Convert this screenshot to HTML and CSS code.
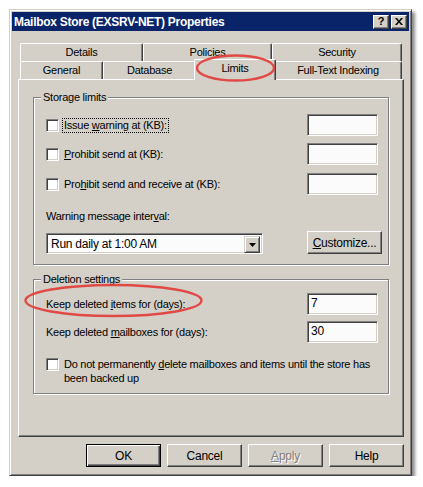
FILE: index.html
```html
<!DOCTYPE html>
<html>
<head>
<meta charset="utf-8">
<title>Mailbox Store (EXSRV-NET) Properties</title>
<link rel="stylesheet" href="styles.css">
</head>
<body>
<div class="window">
  <div class="titlebar">
    <span class="title">Mailbox Store (EXSRV-NET) Properties</span>
    <div class="caption-btns">
      <span class="cbtn q">?</span>
      <span class="cbtn"><svg width="8" height="7" viewBox="0 0 8 7"><path d="M0 0h2l2 2.5L6 0h2L5 3.5 8 7H6L4 4.5 2 7H0l3-3.5z" fill="#000"/></svg></span>
    </div>
  </div>
  <div class="body">
    <div class="tabs">
      <div class="tabrow">
        <div class="tab t-details">Details</div>
        <div class="tab t-policies">Policies</div>
        <div class="tab t-security">Security</div>
      </div>
      <div class="tabrow">
        <div class="tab t-general">General</div>
        <div class="tab t-database">Database</div>
        <div class="tab t-limits selected">Limits</div>
        <div class="tab t-fulltext">Full-Text Indexing</div>
      </div>
    </div>
    <div class="panel">
      <div class="group storage">
        <div class="legend">Storage limits</div>
        <div class="row r1">
          <span class="check"></span>
          <span class="lbl focus">Issue <u>w</u>arning at (KB):</span>
          <span class="textbox"></span>
        </div>
        <div class="row r2">
          <span class="check"></span>
          <span class="lbl"><u>P</u>rohibit send at (KB):</span>
          <span class="textbox"></span>
        </div>
        <div class="row r3">
          <span class="check"></span>
          <span class="lbl">Pro<u>h</u>ibit send and receive at (KB):</span>
          <span class="textbox"></span>
        </div>
        <div class="caption">Warning message inter<u>v</u>al:</div>
        <div class="row combo-row">
          <div class="combo">
            <span class="combo-text">Run daily at 1:00 AM</span>
            <span class="combo-btn"><svg width="7" height="4" viewBox="0 0 7 4"><path d="M0 0h7L3.5 4z" fill="#000"/></svg></span>
          </div>
          <span class="btn customize"><u>C</u>ustomize...</span>
        </div>
      </div>
      <div class="group deletion">
        <div class="legend">Deletion settings</div>
        <div class="row d1">
          <span class="plain">Keep deleted <u>i</u>tems for (days):</span>
          <span class="textbox">7</span>
        </div>
        <div class="row d2">
          <span class="plain">Keep deleted <u>m</u>ailboxes for (days):</span>
          <span class="textbox">30</span>
        </div>
        <div class="row d3">
          <span class="check"></span>
          <span class="lbl multi">Do not permanently <u>d</u>elete mailboxes and items until the store has<br>been backed up</span>
        </div>
      </div>
    </div>
    <div class="btnrow">
      <span class="btn default">OK</span>
      <span class="btn">Cancel</span>
      <span class="btn disabled"><u>A</u>pply</span>
      <span class="btn">Help</span>
    </div>
  </div>
</div>
<svg class="marks" width="423" height="487" viewBox="0 0 423 487">
  <ellipse cx="235.5" cy="68" rx="38.5" ry="12.5" fill="none" stroke="#e23a35" stroke-width="2.4" stroke-opacity="0.9"/>
  <ellipse cx="113.5" cy="300.5" rx="88" ry="15.5" fill="none" stroke="#e23a35" stroke-width="2.4" stroke-opacity="0.9"/>
</svg>
</body>
</html>
```
FILE: styles.css
```css
* { box-sizing: border-box; }

body {
  margin: 0;
  background: #fff;
  font-family: "Liberation Sans", Arial, sans-serif;
  font-size: 11px;
  letter-spacing: -0.25px;
  color: #000;
}

u { text-decoration: underline; text-underline-offset: 1px; }

.window {
  margin: 9px 0 0 9px;
  width: 403px;
  background: #d4d0c8;
  border: 1px solid;
  border-color: #d4d0c8 #404040 #404040 #d4d0c8;
  box-shadow: inset 1px 1px 0 #fff, inset -1px -1px 0 #808080, 3px 3px 3px rgba(0,0,0,0.45);
  padding: 2px;
}

.titlebar {
  height: 19px;
  background: #0a246a;
  display: flex;
  align-items: center;
  padding-left: 2px;
}

.title {
  color: #fff;
  font-weight: bold;
  font-size: 12px;
  letter-spacing: -0.28px;
}

.caption-btns {
  margin-left: auto;
  margin-right: 2px;
  display: flex;
  gap: 2px;
}

.cbtn {
  width: 16px;
  height: 14px;
  background: #d4d0c8;
  border: 1px solid;
  border-color: #fff #404040 #404040 #fff;
  box-shadow: inset -1px -1px 0 #808080;
  display: flex;
  align-items: center;
  justify-content: center;
  font-weight: bold;
  font-size: 11px;
  line-height: 1;
}

.body {
  padding: 12px 5px 6px 6px;
}

.tabs {
  margin: 0 2px;
  height: 36px;
}

.tabrow {
  display: flex;
  height: 18px;
}

.tab {
  height: 18px;
  background: #d4d0c8;
  border-left: 1px solid #fff;
  border-top: 1px solid #fff;
  border-right: 1px solid #404040;
  box-shadow: inset -1px 0 0 #808080;
  border-top-left-radius: 2px;
  border-top-right-radius: 2px;
  text-align: center;
  line-height: 16px;
}

.t-details { width: 123px; }
.t-policies { width: 129px; }
.t-security { width: 130px; }
.t-general { width: 83px; }
.t-database { width: 93px; }
.t-limits { width: 78px; }
.t-fulltext { width: 128px; }

.tab.selected {
  position: relative;
  z-index: 1;
  width: 82px;
  height: 21px;
  margin: -2px -2px 0 -2px;
}

.panel {
  height: 358px;
  border: 1px solid;
  border-color: #fff #404040 #404040 #fff;
  box-shadow: inset -1px -1px 0 #808080;
  padding: 17px 14px 0 14px;
}

.group {
  display: flex;
  flex-direction: column;
  border: 1px solid #808080;
  box-shadow: inset 1px 1px 0 #fff, 1px 1px 0 #fff;
  padding: 0 6px 10px 12px;
}

.group.deletion {
  margin-top: 14px;
  padding-bottom: 8px;
}

.legend {
  align-self: flex-start;
  margin: -7px 0 0 -5px;
  padding: 0 2px;
  line-height: 13px;
  background: #d4d0c8;
}

.row {
  display: flex;
  align-items: center;
  height: 22px;
}

.r1 { margin-top: 10px; }
.r2 { margin-top: 7px; }
.r3 { margin-top: 8px; }

.caption {
  margin-top: 15px;
  line-height: 13px;
}

.combo-row {
  margin-top: 8px;
  height: 23px;
  align-items: flex-end;
}

.d1 { margin-top: 7px; }
.d2 { margin-top: 6px; }
.d3 {
  margin-top: 14px;
  height: 28px;
  align-items: flex-start;
}
.d3 .check { margin-top: 1px; }

.check {
  flex: none;
  width: 13px;
  height: 13px;
  background: #fff;
  border: 1px solid;
  border-color: #808080 #fff #fff #808080;
  box-shadow: inset 1px 1px 0 #404040, inset -1px -1px 0 #d4d0c8;
}

.lbl {
  margin-left: 3px;
  padding: 0 1px;
  border: 1px dotted transparent;
  line-height: 13px;
}

.lbl.focus { border-color: #000; }

.lbl.multi {
  line-height: 14px;
  border: none;
  padding: 0;
  margin-left: 5px;
}

.plain { line-height: 13px; }

.textbox {
  margin-left: auto;
  margin-right: 4px;
  width: 71px;
  height: 22px;
  background: #fbfbfb;
  border: 1px solid;
  border-color: #808080 #fff #fff #808080;
  box-shadow: inset 1px 1px 0 #404040, inset -1px -1px 0 #d4d0c8;
  padding: 2px 0 0 3px;
  line-height: 14px;
  font-size: 12px;
}

.combo {
  display: flex;
  width: 217px;
  height: 21px;
  background: #fbfbfb;
  border: 1px solid;
  border-color: #808080 #fff #fff #808080;
  box-shadow: inset 1px 1px 0 #404040, inset -1px -1px 0 #d4d0c8;
  padding: 2px;
}

.combo-text {
  flex: 1;
  padding-left: 2px;
  line-height: 17px;
  font-size: 12px;
}

.combo-btn {
  width: 16px;
  height: 17px;
  background: #d4d0c8;
  border: 1px solid;
  border-color: #d4d0c8 #404040 #404040 #d4d0c8;
  box-shadow: inset 1px 1px 0 #fff, inset -1px -1px 0 #808080;
  display: flex;
  align-items: center;
  justify-content: center;
}

.btn {
  flex: none;
  width: 75px;
  height: 23px;
  background: #d4d0c8;
  border: 1px solid;
  border-color: #fff #404040 #404040 #fff;
  box-shadow: inset -1px -1px 0 #808080;
  display: flex;
  align-items: center;
  justify-content: center;
  font-size: 12px;
}

.btn.customize { margin-left: auto; }

.btn.default {
  border-color: #000;
  box-shadow: inset 1px 1px 0 #fff, inset -1px -1px 0 #404040, inset -2px -2px 0 #808080;
}

.btn.disabled {
  color: #808080;
  text-shadow: 1px 1px 0 #fff;
}

.btnrow {
  display: flex;
  justify-content: flex-end;
  gap: 6px;
  margin-top: 7px;
  height: 23px;
}

.marks {
  position: absolute;
  left: 0;
  top: 0;
  z-index: 2;
  pointer-events: none;
}
```
